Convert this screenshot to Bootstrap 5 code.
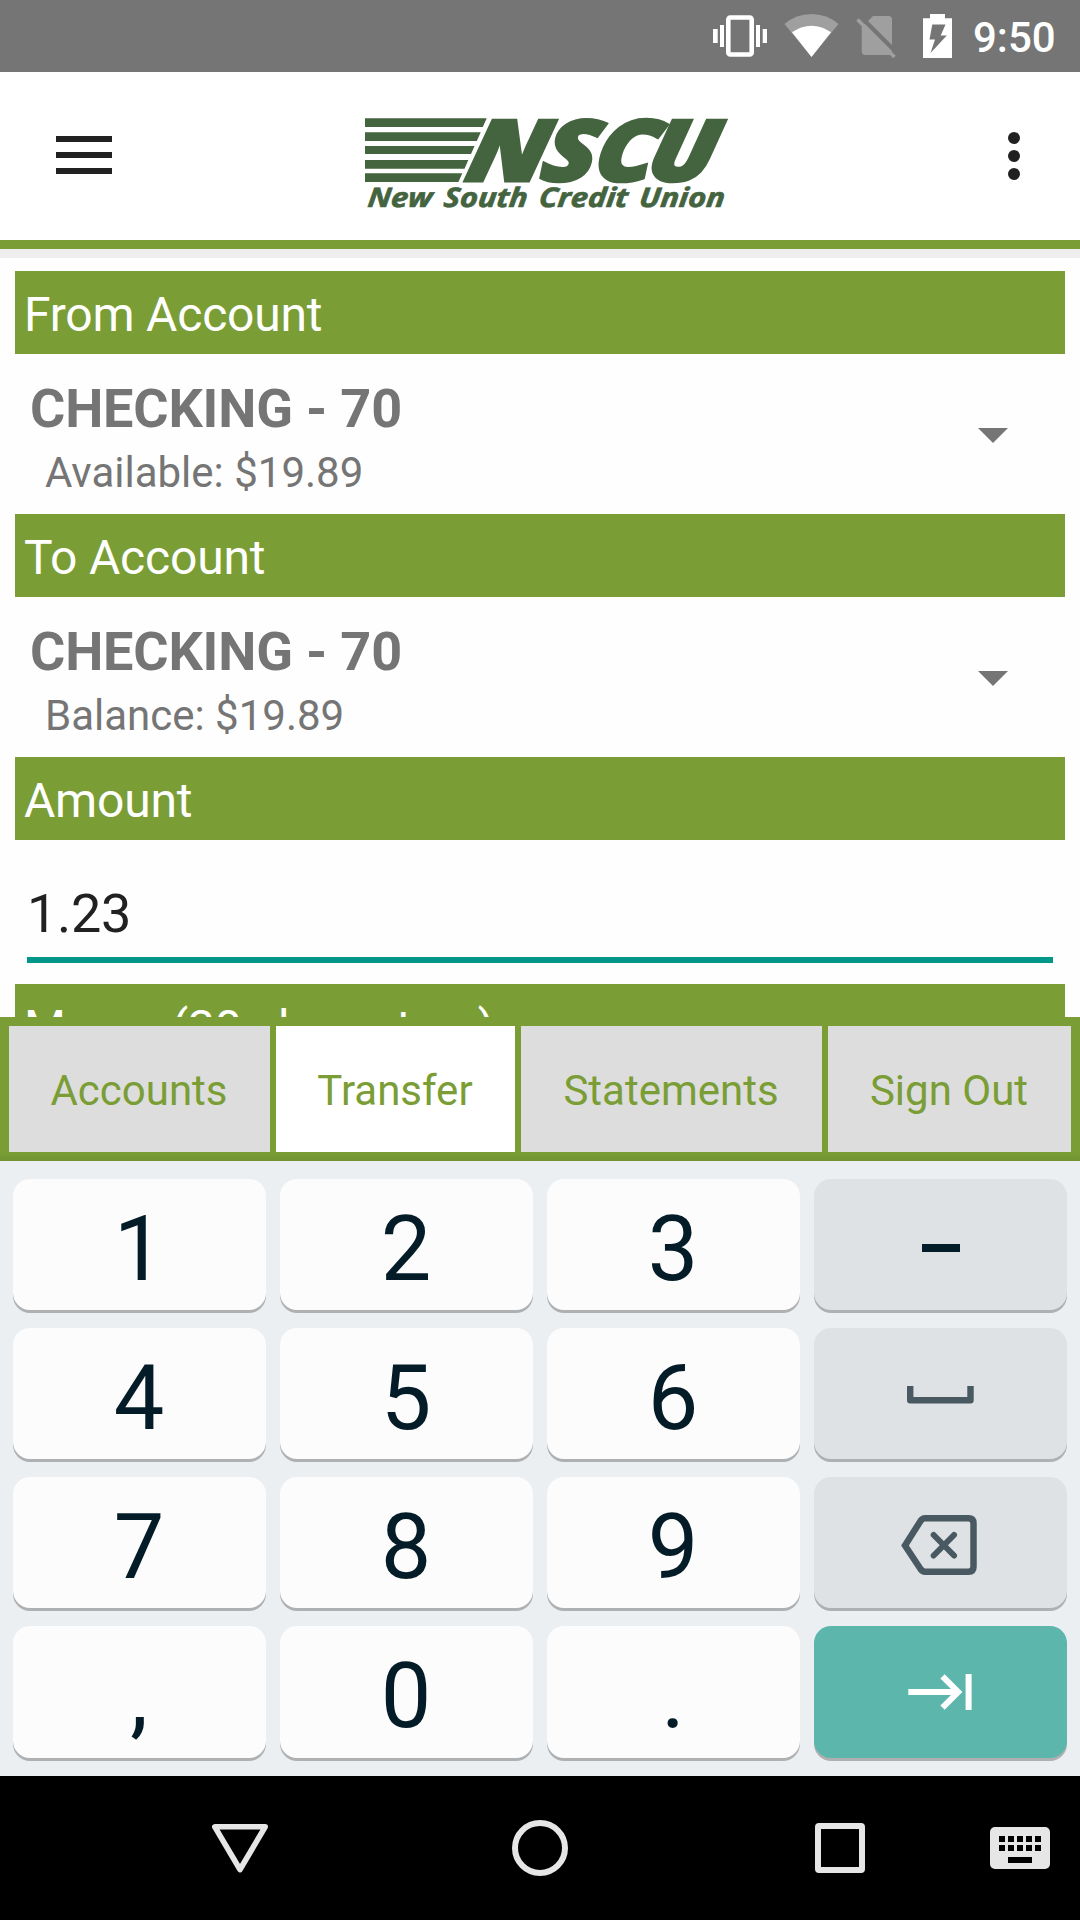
<!DOCTYPE html>
<html lang="en">
<head>
<meta charset="utf-8">
<title>New South Credit Union – Transfer</title>
<link rel="stylesheet" href="https://cdn.jsdelivr.net/npm/bootstrap@5.3.0/dist/css/bootstrap.min.css">
<style>
:root{--leaf:#7a9e35;--ink:#212121;--soft:#757575}
body{width:1080px;height:1920px;overflow:hidden;font-family:Roboto,"Liberation Sans",sans-serif;color:var(--ink);background:#fff;line-height:1}
svg{display:block;flex:none}
.status{height:72px;background:#757575;color:#fff;padding-right:25px}
.clock{font-size:42px;font-weight:500;width:80px;line-height:49px;padding-top:2px;margin-left:-2px;margin-right:2px;white-space:nowrap}
.appbar{height:177px;padding:0 60px 0 56px;border-bottom:9px solid var(--leaf);background:#fff}
.brand{margin-left:250px}
.content{height:768px;overflow:hidden;background:#fefefe;border-top:9px solid #eee;padding:13px 15px 0}
.band{height:83px;background:var(--leaf);color:#fff;font-size:48px;line-height:56px;padding:16px 9px 0;letter-spacing:-.2px}
.picker{height:160px;color:var(--soft);padding:0 57px 0 15px}
.acct{font-size:54px;font-weight:700;line-height:64px;margin-top:23px;letter-spacing:-.18px}
.detail{font-size:42px;line-height:50px;padding-left:15px;margin-top:7px}
.amount{height:123px;margin:0 12px 21px;border-bottom:6px solid #009688;font-size:54px;line-height:64px;padding-top:42px;letter-spacing:-.3px}
.tabs{height:144px;background:linear-gradient(var(--leaf) 94%,#729332);padding:9px;display:grid;grid-template-columns:261px 239px 301px 243px;column-gap:6px}
.tab{background:#ddd;color:var(--leaf);font-size:42px;text-decoration:none;padding:3px 1px 0 0;white-space:nowrap}
.tab.on{background:#fff}
.keys{height:615px;background:#ebeff2;padding:18px 13px 0;display:grid;grid-template-columns:repeat(4,253px);grid-template-rows:131px 131px 131px 132px;gap:18px 14px;align-content:start}
.key{border:0;border-radius:17px;background:#fcfcfc;box-shadow:0 3px 0 #aeb0b2;color:#041c27;font-size:90px;line-height:105px;padding:9px 1px 0 0}
.key.fn{background:#dee2e5;padding:0}
.key.next{background:#5db6ac}
.sysnav{height:144px;background:#000;padding-left:212px}
.home{margin-left:244px}
.recent{margin-left:247px}
</style>
</head>
<body class="d-flex flex-column">
<header class="status d-flex align-items-center justify-content-end">
<svg width="56" height="72" viewBox="712 0 56 72" fill="#fff"><rect x="728.3" y="17.5" width="23.4" height="37" rx="2" fill="none" stroke="#fff" stroke-width="4.6"/><path d="M713 29h4.7v14H713zM720 25h4v22h-4zM756 25h4v22h-4zM762.7 29h4.3v14h-4.3z"/></svg>
<svg width="86" height="72" viewBox="768 0 86 72"><path d="M811.5 57L784.5 24Q796 14 811.5 14T838.5 24Z" fill="#9f9f9f"/><path d="M811.5 57L792 32.3Q801 25.7 811.5 25.7T831 32.3Z" fill="#fff"/></svg>
<svg width="56" height="72" viewBox="854 0 56 72"><path d="M873 16H888.500Q892 16 892 19.500V51.500Q892 55 888.500 55H865.500Q861.700 55 861.700 51.500V26.500L867 22Z" fill="#9f9f9f"/><path d="M860.500 16.500L897 53" stroke="#757575" stroke-width="4"/><path d="M857.500 19.500L894.500 57" stroke="#9f9f9f" stroke-width="3.600"/></svg>
<svg width="65" height="72" viewBox="910 0 65 72"><path fill="#fff" fill-rule="evenodd" d="M930 14h15v4.300h7V58h-29V18.300h7zM932.300 24.500L929.500 39.500H935L930.500 53L946.800 35.500H940.700L945.500 24.500Z"/></svg>
<span class="clock">9:50</span>
</header>
<nav class="appbar d-flex align-items-center">
<svg width="56" height="168" viewBox="56 72 56 168" fill="#212121"><path d="M56 136h56v6H56zM56 152h56v6H56zM56 168h56v6H56z"/></svg>
<svg class="brand" width="368" height="168" viewBox="362 72 368 168" fill="#44633f" role="img" aria-label="NSCU New South Credit Union">
<path d="M365 118.300H486.700L482.800 127H365zM365 132.300H480.700L476.800 141H365zM365 146H474.600L471 154H365zM365 160H468.300L464.500 168.700H365zM365 173.300H462.300L458.400 182H365z"/>
<g transform="translate(0 182) skewX(-12)" font-family="Open Sans" font-weight="800" font-style="italic" font-size="85" stroke="#44633f" stroke-width="3">
<text x="463" y="-1" textLength="80" lengthAdjust="spacingAndGlyphs">N</text><text x="538" y="-1" textLength="55" lengthAdjust="spacingAndGlyphs">S</text><text x="591" y="-1" textLength="61" lengthAdjust="spacingAndGlyphs">C</text><text x="644" y="-1" textLength="68" lengthAdjust="spacingAndGlyphs">U</text></g>
<text transform="translate(367 207) skewX(-6)" font-family="Open Sans" font-weight="700" font-style="italic" font-size="27" stroke="#44633f" stroke-width=".7" word-spacing="3" textLength="357" lengthAdjust="spacingAndGlyphs">New South Credit Union</text></svg>
<svg class="ms-auto" width="12" height="168" viewBox="1008 72 12 168" fill="#212121"><circle cx="1014" cy="138" r="6"/><circle cx="1014" cy="156" r="6"/><circle cx="1014" cy="174" r="6"/></svg>
</nav>
<main class="content">
<div class="band">From Account</div>
<div class="picker d-flex justify-content-between"><div><div class="acct">CHECKING - 70</div><div class="detail">Available: $19.89</div></div><svg width="30" height="160" viewBox="0 0 30 160"><path d="M0 74h30L15 89z" fill="#757575"/></svg></div>
<div class="band">To Account</div>
<div class="picker d-flex justify-content-between"><div><div class="acct">CHECKING - 70</div><div class="detail">Balance: $19.89</div></div><svg width="30" height="160" viewBox="0 0 30 160"><path d="M0 74h30L15 89z" fill="#757575"/></svg></div>
<div class="band">Amount</div>
<div class="amount">1.23</div>
<div class="band">Memo (30 characters)</div>
</main>
<nav class="tabs">
<a class="tab d-flex align-items-center justify-content-center">Accounts</a>
<a class="tab on d-flex align-items-center justify-content-center">Transfer</a>
<a class="tab d-flex align-items-center justify-content-center">Statements</a>
<a class="tab d-flex align-items-center justify-content-center">Sign Out</a>
</nav>
<section class="keys">
<button class="key">1</button><button class="key">2</button><button class="key">3</button>
<button class="key fn d-flex align-items-center justify-content-center"><svg width="253" height="131" viewBox="814 1179 253 131"><path d="M922 1244h38v8h-38z" fill="#041c27"/></svg></button>
<button class="key">4</button><button class="key">5</button><button class="key">6</button>
<button class="key fn d-flex align-items-center justify-content-center"><svg width="253" height="131" viewBox="814 1328 253 131"><path d="M910.200 1386V1400.200H970.500V1386" fill="none" stroke="#485961" stroke-width="6.400" stroke-linejoin="round"/></svg></button>
<button class="key">7</button><button class="key">8</button><button class="key">9</button>
<button class="key fn d-flex align-items-center justify-content-center"><svg width="253" height="131" viewBox="814 1477 253 131" fill="none" stroke="#485961" stroke-width="6.500"><path d="M905 1545.500L920.500 1521Q922.500 1518.300 925 1518.300H968.500Q973.500 1518.300 973.500 1523.300V1566.700Q973.500 1571.700 968.500 1571.700H925Q922.500 1571.700 920.500 1569Z"/><path d="M933.700 1535L954 1555.500M954 1535L933.700 1555.500" stroke-width="6" stroke-linecap="round"/></svg></button>
<button class="key">,</button><button class="key">0</button><button class="key">.</button>
<button class="key fn next d-flex align-items-center justify-content-center"><svg width="253" height="132" viewBox="814 1626 253 132" fill="none" stroke="#fff" stroke-width="6"><path d="M908.300 1692H957M942.500 1676.300L958.200 1692L942.500 1707.700M968.600 1674V1710"/></svg></button>
</section>
<footer class="sysnav d-flex align-items-center">
<svg width="56" height="144" viewBox="212 1776 56 144"><path d="M214.800 1826.800H265.200L240 1869.500Z" fill="none" stroke="#e6e6e6" stroke-width="5.600" stroke-linejoin="round"/></svg>
<svg class="home" width="56" height="144" viewBox="512 1776 56 144"><circle cx="540" cy="1848" r="25" fill="none" stroke="#e6e6e6" stroke-width="6"/></svg>
<svg class="recent" width="235" height="144" viewBox="815 1776 235 144"><rect x="818" y="1826" width="44" height="44" rx="1" fill="none" stroke="#e6e6e6" stroke-width="6"/><rect x="990" y="1827" width="60" height="42" rx="5" fill="#e6e6e6"/><path d="M999 1839h42M999 1848h42" stroke="#000" stroke-width="6" stroke-dasharray="6 3"/><path d="M1008 1857h24v6h-24z"/></svg>
</footer>
<script src="https://cdn.jsdelivr.net/npm/bootstrap@5.3.0/dist/js/bootstrap.bundle.min.js"></script>
</body>
</html>
